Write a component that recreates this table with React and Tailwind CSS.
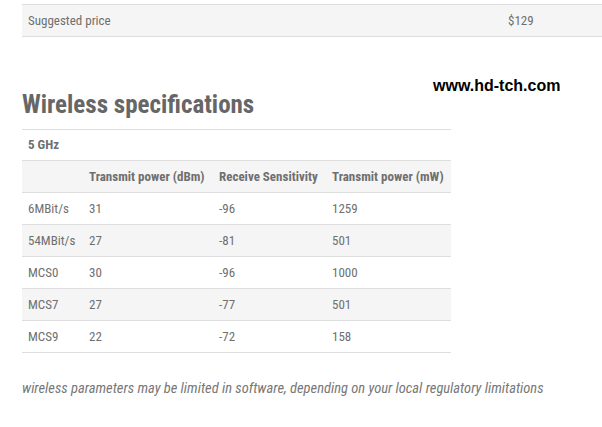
const rows = [
  { rate: "6MBit/s", tx: "31", rx: "-96", mw: "1259" },
  { rate: "54MBit/s", tx: "27", rx: "-81", mw: "501" },
  { rate: "MCS0", tx: "30", rx: "-96", mw: "1000" },
  { rate: "MCS7", tx: "27", rx: "-77", mw: "501" },
  { rate: "MCS9", tx: "22", rx: "-72", mw: "158" },
]

const cond = { fontFamily: '"Roboto Condensed", "Liberation Sans Narrow", Roboto, sans-serif' }

export default function App() {
  return (
    <div className="w-[602px] h-[427px] bg-white overflow-hidden text-[#6f6f6f] text-[13px]" style={cond}>
      {/* price row */}
      <div className="mt-[4px] ml-[22px] flex h-[33px] items-center border-y border-[#dedede] bg-[#f5f5f5]">
        <div className="w-[486px] pl-[6px]">Suggested price</div>
        <div>$129</div>
      </div>

      <div className="relative mt-[40px] ml-[22px]">
        <div
          className="absolute left-[411px] top-[-3px] text-[16px] font-bold text-black"
          style={{ fontFamily: '"Liberation Sans", Arial, sans-serif' }}
        >
          www.hd-tch.com
        </div>
        <h2 className="pt-[10px] text-[25px] font-bold leading-[36px] text-[#666]">
          Wireless specifications
        </h2>

        <div className="w-[429px] mt-[6px]">
          <div className="flex h-[32px] items-center border-y border-[#dedede] pl-[6px] font-bold">5 GHz</div>
          <div className="flex h-[32px] items-center border-b border-[#dedede] bg-[#f5f5f5] font-bold">
            <div className="w-[61px]" />
            <div className="w-[130px] pl-[6px]">Transmit power (dBm)</div>
            <div className="w-[113px] pl-[6px]">Receive Sensitivity</div>
            <div className="pl-[6px]">Transmit power (mW)</div>
          </div>
          {rows.map((r, i) => (
            <div
              key={r.rate}
              className={`flex h-[32px] items-center border-b border-[#dedede] ${i % 2 === 1 ? "bg-[#f5f5f5]" : ""}`}
            >
              <div className="w-[61px] pl-[6px]">{r.rate}</div>
              <div className="w-[130px] pl-[6px]">{r.tx}</div>
              <div className="w-[113px] pl-[6px]">{r.rx}</div>
              <div className="pl-[6px]">{r.mw}</div>
            </div>
          ))}
        </div>

        <p className="mt-[25px] text-[14.5px] italic text-[#777]">
          wireless parameters may be limited in software, depending on your local regulatory limitations
        </p>
      </div>
    </div>
  )
}
